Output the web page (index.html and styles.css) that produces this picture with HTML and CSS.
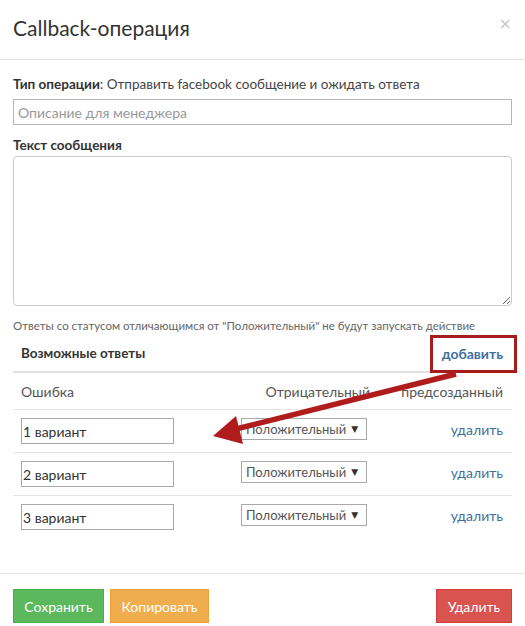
FILE: index.html
```html
<!DOCTYPE html>
<html lang="ru">
<head>
<meta charset="utf-8">
<title>Callback-операция</title>
<link rel="stylesheet" href="styles.css">
</head>
<body>
<div class="modal">
  <div class="modal-header">
    <h4 class="modal-title">Callback-операция</h4>
    <button class="close" type="button">×</button>
  </div>
  <div class="modal-body">
    <p class="op-type"><b>Тип операции</b>: Отправить facebook сообщение и ожидать ответа</p>
    <input class="field" type="text" placeholder="Описание для менеджера">
    <p class="label">Текст сообщения</p>
    <textarea class="message"></textarea>
    <p class="hint">Ответы со статусом отличающимся от "Положительный" не будут запускать действие</p>
    <div class="answers">
      <div class="answers-head">
        <span class="answers-title">Возможные ответы</span>
        <a class="link bold" href="#">добавить</a>
      </div>
      <div class="row head-row">
        <div class="c1">Ошибка</div>
        <div class="c2 right">Отрицательный</div>
        <div class="c3">предсозданный</div>
      </div>
      <div class="row">
        <div class="c1"><input class="small-input" type="text" value="1 вариант"></div>
        <div class="c2"><div class="select">Положительный <span class="caret">▼</span></div></div>
        <div class="c3"><a class="link" href="#">удалить</a></div>
      </div>
      <div class="row">
        <div class="c1"><input class="small-input" type="text" value="2 вариант"></div>
        <div class="c2"><div class="select">Положительный <span class="caret">▼</span></div></div>
        <div class="c3"><a class="link" href="#">удалить</a></div>
      </div>
      <div class="row">
        <div class="c1"><input class="small-input" type="text" value="3 вариант"></div>
        <div class="c2"><div class="select">Положительный <span class="caret">▼</span></div></div>
        <div class="c3"><a class="link" href="#">удалить</a></div>
      </div>
    </div>
  </div>
  <div class="modal-footer">
    <button class="btn btn-green" type="button">Сохранить</button>
    <button class="btn btn-orange" type="button">Копировать</button>
    <span class="spacer"></span>
    <button class="btn btn-red" type="button">Удалить</button>
  </div>
  <div class="callout-box"></div>
  <svg class="callout-arrow" width="525" height="626" viewBox="0 0 525 626">
    <line x1="456" y1="374" x2="236" y2="429" stroke="#b01c1c" stroke-width="5.5"/>
    <polygon points="213,436 236,416 243,444" fill="#b01c1c"/>
  </svg>
</div>
</body>
</html>
```

FILE: styles.css
```css
* { box-sizing: border-box; }
html, body { margin: 0; padding: 0; background: #fff; }
body {
  font-family: "Lato", "Liberation Sans", sans-serif;
  color: #333;
  font-size: 13.5px;
}
.modal {
  position: relative;
  width: 525px;
  height: 626px;
  overflow: hidden;
}
.modal-header {
  display: flex;
  justify-content: space-between;
  align-items: flex-start;
  height: 60px;
  padding: 15px 13px 0 13px;
  border-bottom: 1px solid #e5e5e5;
}
.modal-title {
  margin: 0;
  font-size: 21px;
  font-weight: 400;
  line-height: 26px;
  color: #333;
}
.close {
  border: 0;
  background: none;
  color: #c8c8c8;
  font-size: 16px;
  padding: 0;
  margin-top: 2px;
  line-height: 14px;
  font-family: "DejaVu Sans", sans-serif;
}
.modal-body {
  padding: 15px 13px 0 13px;
}
.op-type {
  margin: 0 0 6px 0;
  line-height: 18px;
  color: #444;
}
.op-type b { color: #333; }
.field {
  display: block;
  width: 100%;
  height: 26px;
  border: 1px solid #b5b5b5;
  border-radius: 0;
  padding: 0 4px;
  font-family: inherit;
  font-size: 14px;
  color: #333;
}
.field::placeholder { color: #999; }
.label {
  margin: 11px 0 2px 0;
  font-weight: 700;
  line-height: 18px;
}
.message {
  display: block;
  width: 100%;
  height: 150px;
  border: 1px solid #ccc;
  border-radius: 4px;
  resize: vertical;
  margin: 0;
}
.hint {
  margin: 12px 0 0 0;
  font-size: 11.5px;
  color: #666;
  line-height: 16px;
  white-space: nowrap;
}
.answers-head {
  display: flex;
  justify-content: space-between;
  align-items: center;
  height: 38px;
  margin-top: 1px;
  padding: 0 9px 0 8px;
  border-bottom: 2px solid #e0e0e0;
}
.answers-title { font-weight: 700; }
.bold { font-weight: 700; }
.link {
  color: #3f6f9e;
  text-decoration: none;
  font-size: 14px;
}
.row {
  display: flex;
  align-items: flex-start;
  height: 43px;
  padding-top: 8px;
  border-bottom: 1px solid #e5e5e5;
}
.row:last-child { border-bottom: 0; }
.head-row {
  height: 37px;
  padding-top: 0;
  align-items: center;
  font-size: 14px;
}
.c1 { width: 220px; padding-left: 8px; }
.c2 { width: 147px; padding-left: 8px; }
.c2.right { text-align: right; padding-right: 10px; }
.c3 { flex: 1; text-align: right; padding-right: 9px; }
.row:not(.head-row) .c3 { padding-top: 3px; }
.head-row .c1, .head-row .c2, .head-row .c3 { color: #555; }
.small-input {
  width: 153px;
  height: 26px;
  border: 1px solid #a9a9a9;
  padding: 0 1px;
  font-family: inherit;
  font-size: 14px;
  color: #333;
  border-radius: 0;
}
.select {
  display: inline-flex;
  align-items: center;
  gap: 5px;
  height: 22px;
  width: 126px;
  border: 1px solid #a9a9a9;
  padding: 0 4px;
  color: #555;
  font-size: 13px;
  white-space: nowrap;
}
.caret { font-size: 9px; color: #333; font-family: "DejaVu Sans", sans-serif; }
.modal-footer {
  display: flex;
  gap: 6px;
  border-top: 1px solid #e5e5e5;
  padding: 15px 13px 0 13px;
  position: absolute;
  left: 0;
  right: 0;
  top: 573px;
}
.spacer { flex: 1; }
.btn {
  height: 34px;
  border: 1px solid transparent;
  border-radius: 0;
  color: #fff;
  font-family: inherit;
  font-size: 14px;
  padding: 0 10px;
}
.btn-green { background: #5cb85c; border-color: #4cae4c; width: 91px; }
.btn-orange { background: #f0ad4e; border-color: #eea236; width: 99px; }
.btn-red { background: #d9534f; border-color: #d43f3a; width: 76px; }
.callout-box {
  position: absolute;
  left: 430px;
  top: 335px;
  width: 87px;
  height: 38px;
  border: 3px solid #a61b1b;
}
.callout-arrow {
  position: absolute;
  left: 0;
  top: 0;
  pointer-events: none;
}
```
